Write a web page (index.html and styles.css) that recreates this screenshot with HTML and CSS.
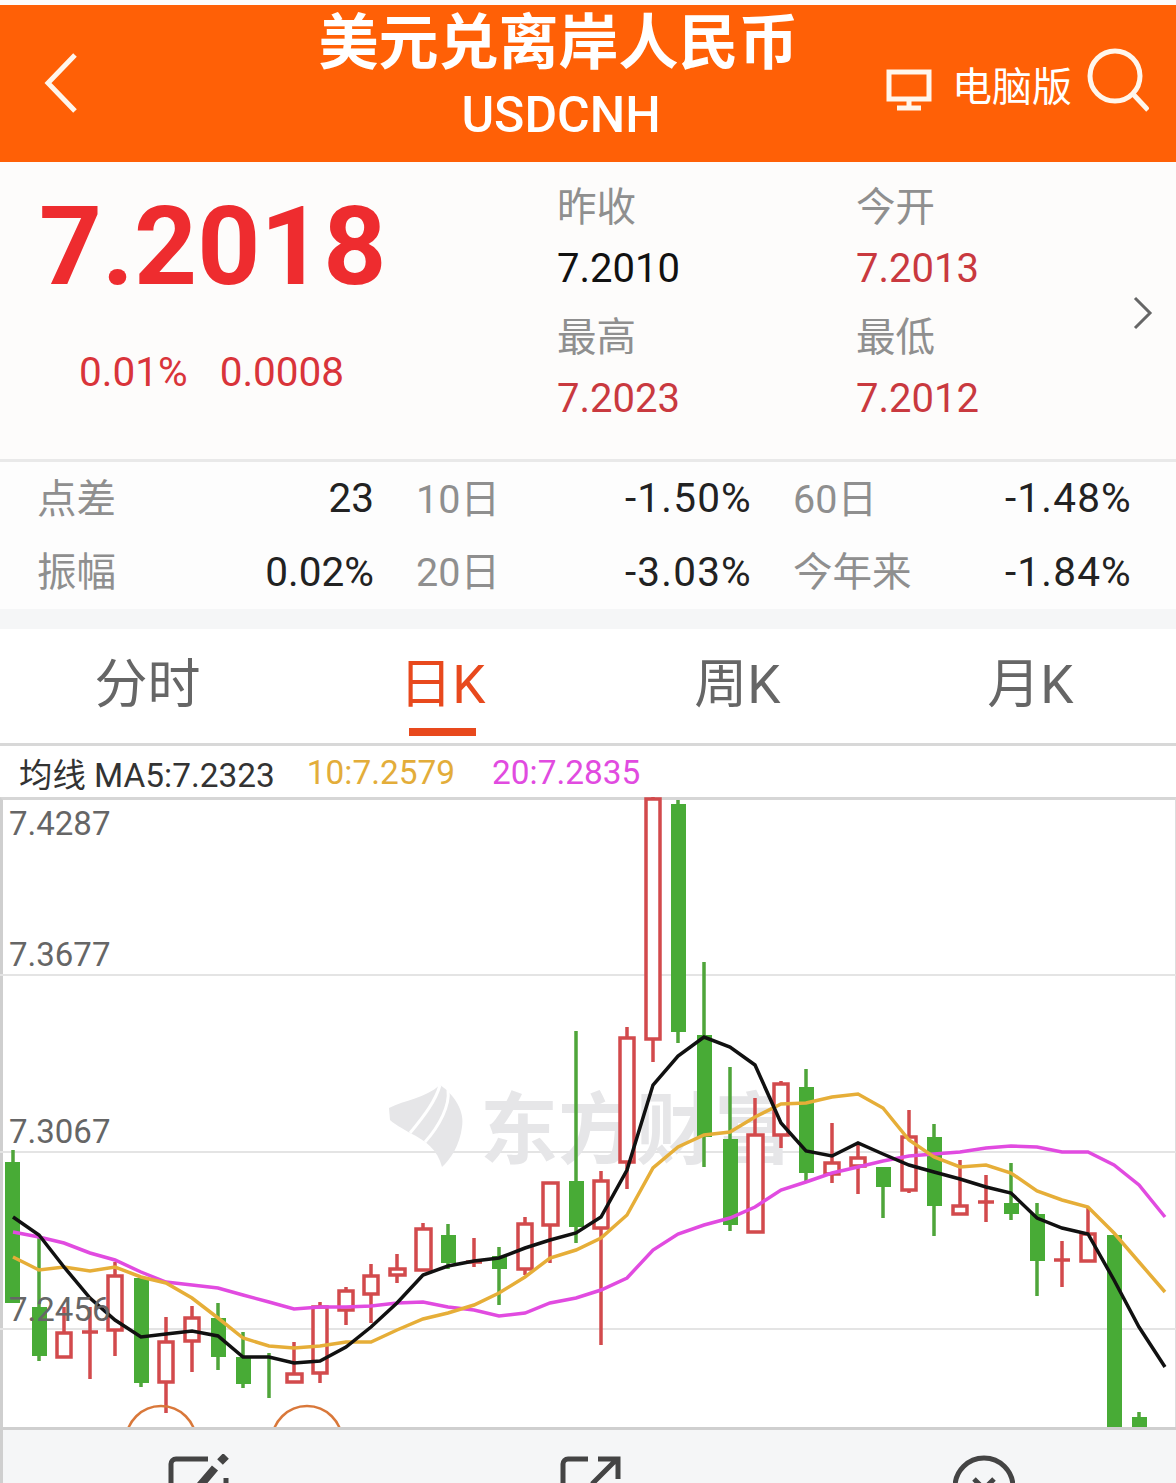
FILE: index.html
```html
<!DOCTYPE html>
<html lang="zh-CN">
<head>
  <meta charset="UTF-8" />
  <title>美元兑离岸人民币 USDCNH</title>
  <link rel="stylesheet" href="styles.css">
</head>
<body>
  <header class="topbar">
    <svg class="back" viewBox="0 0 36 62"><path d="M32 3L5 31l27 28"/></svg>
    <div class="title">
      <h1>美元兑离岸人民币</h1>
      <p>USDCNH</p>
    </div>
    <div class="tools">
      <svg class="pc" viewBox="0 0 46 42"><path d="M3 3h40v27H3zM23 30v9M11 39h24"/></svg>
      <span class="pc-label">电脑版</span>
      <svg class="search" viewBox="0 0 62 64"><circle cx="28" cy="28" r="25"/><path d="M46 46l15 16"/></svg>
    </div>
  </header>

  <section class="quote">
    <div class="price">
      <div class="last">7.2018</div>
      <div class="change"><span>0.01%</span><span>0.0008</span></div>
    </div>
    <div class="ohlc">
      <div class="cell"><label>昨收</label><b>7.2010</b></div>
      <div class="cell"><label>今开</label><b class="red">7.2013</b></div>
      <div class="cell"><label>最高</label><b class="red">7.2023</b></div>
      <div class="cell"><label>最低</label><b class="red">7.2012</b></div>
    </div>
    <svg class="more" viewBox="0 0 20 34"><path d="M2 2l15 15L2 32"/></svg>
  </section>

  <section class="stats">
    <div class="stat s1"><label>点差</label><b>23</b></div>
    <div class="stat s2"><label>10日</label><b>-1.50%</b></div>
    <div class="stat s3"><label>60日</label><b>-1.48%</b></div>
    <div class="stat s1"><label>振幅</label><b>0.02%</b></div>
    <div class="stat s2"><label>20日</label><b>-3.03%</b></div>
    <div class="stat s3"><label>今年来</label><b>-1.84%</b></div>
  </section>

  <nav class="tabs">
    <a>分时</a>
    <a class="on">日K</a>
    <a>周K</a>
    <a>月K</a>
  </nav>

  <div class="legend">
    <span>均线 MA5:7.2323</span>
    <span class="ma10">10:7.2579</span>
    <span class="ma20">20:7.2835</span>
  </div>

  <div class="chart">
    <span class="axis a1">7.4287</span>
    <span class="axis a2">7.3677</span>
    <span class="axis a3">7.3067</span>
    <span class="axis a4">7.2456</span>
    <!-- viewBox keeps page coordinates so the candles read like the screenshot -->
    <svg class="plot" viewBox="0 797 1176 630">
      <path class="grid" d="M0 975H1176M0 1152H1176M0 1329H1176"/>

      <!-- watermark -->
      <g class="mark">
        <path d="M389 1108C405 1100 425 1098 440 1085C455 1095 465 1112 462 1127C460 1145 450 1160 442 1167C438 1150 425 1140 410 1133C402 1128 394 1124 390 1120z"/>
        <path class="mark-cut" d="M440 1085C436 1100 425 1115 410 1133M448 1090C450 1105 440 1125 425 1142"/>
        <text x="480" y="1158">东方财富</text>
      </g>

      <g class="candles">
        <path class="dn" d="M13 1150V1162M39 1237V1361M141 1383V1387M218 1303V1370M243 1332V1388M269 1353V1398M448 1224V1269M499 1247V1305M576 1031V1243M678 800V1043M704 962V1167M730 1067V1231M806 1069V1182M883 1187V1218M934 1124V1236M1011 1163V1220M1037 1203V1296M1139 1412V1417"/>
        <path class="dn-body" d="M5 1162h15v141H5zM32 1307h15v49H32zM134 1278h15v105h-15zM211 1318h15v39h-15zM236 1357h15v27h-15zM441 1235h15v28h-15zM492 1256h15v13h-15zM569 1181h15v46h-15zM671 804h15v228h-15zM697 1035h15v102h-15zM723 1139h15v86h-15zM799 1087h15v86h-15zM876 1167h15v20h-15zM927 1137h15v69h-15zM1004 1203h15v11h-15zM1030 1214h15v47h-15zM1107 1235h15v192h-15zM1132 1417h15v10h-15z"/>
        <path class="up" d="M64 1307V1333M90 1307V1379M82 1332H98M115 1262V1276M115 1330V1356M166 1317V1342M166 1382V1413M192 1306V1318M192 1341V1372M294 1342V1374M320 1302V1307M320 1373V1383M346 1287V1291M346 1310V1325M371 1264V1276M371 1294V1323M397 1254V1269M397 1275V1283M423 1223V1229M474 1238V1267M466 1262H482M525 1217V1224M525 1269V1275M550 1225V1263M601 1171V1181M601 1228V1345M627 1027V1038M627 1162V1189M653 797V799M653 1039V1062M755 1098V1135M781 1081V1084M781 1135V1148M832 1123V1163M832 1174V1183M858 1143V1158M858 1166V1194M909 1110V1137M909 1190V1193M960 1160V1206M986 1175V1222M978 1202H994M1062 1241V1287M1054 1260H1070M1088 1208V1234"/>
        <path class="up-body" d="M57 1333h14v24H57zM108 1276h14v54h-14zM159 1342h14v40h-14zM185 1318h14v23h-14zM287 1374h15v8h-15zM313 1307h14v66h-14zM339 1291h14v19h-14zM364 1276h14v18h-14zM390 1269h15v6h-15zM416 1229h15v41h-15zM518 1224h14v45h-14zM543 1183h15v42h-15zM594 1181h14v47h-14zM620 1038h14v124h-14zM646 799h14v240h-14zM748 1135h15v97h-15zM774 1084h14v51h-14zM825 1163h14v11h-14zM851 1158h14v8h-14zM902 1137h14v53h-14zM953 1206h14v8h-14zM1081 1234h14v27h-14z"/>
      </g>

      <polyline class="line l20" points="13,1232 39,1237 64,1243 90,1253 115,1260 141,1272 166,1282 192,1285 218,1288 243,1295 269,1302 294,1309 320,1307 346,1307 371,1306 397,1303 423,1302 448,1307 474,1310 499,1316 525,1313 550,1303 576,1298 601,1290 627,1278 653,1250 678,1234 704,1225 730,1218 755,1207 781,1190 806,1182 832,1173 858,1167 883,1161 909,1156 934,1154 960,1152 986,1148 1011,1146 1037,1147 1062,1152 1088,1152 1114,1165 1139,1185 1165,1217"/>
      <polyline class="line l10" points="13,1257 39,1270 64,1267 90,1271 115,1267 141,1277 166,1283 192,1298 218,1318 243,1338 269,1346 294,1348 320,1346 346,1342 371,1342 397,1330 423,1319 448,1313 474,1305 499,1293 525,1277 550,1258 576,1250 601,1238 627,1215 653,1168 678,1147 704,1135 730,1132 755,1117 781,1104 806,1103 832,1097 858,1094 883,1108 909,1140 934,1157 960,1167 986,1165 1011,1173 1037,1191 1062,1200 1088,1207 1114,1233 1139,1262 1165,1292"/>
      <polyline class="line l5" points="13,1217 39,1235 64,1267 90,1298 115,1320 141,1337 166,1334 192,1331 218,1336 243,1357 269,1357 294,1363 320,1361 346,1347 371,1327 397,1303 423,1275 448,1266 474,1261 499,1258 525,1248 550,1240 576,1233 601,1217 627,1170 653,1085 678,1056 704,1037 730,1047 755,1065 781,1123 806,1151 832,1156 858,1143 883,1154 909,1165 934,1172 960,1179 986,1187 1011,1193 1037,1218 1062,1228 1088,1234 1114,1280 1139,1327 1165,1367"/>

      <!-- the two event markers, cut off by the bottom edge -->
      <circle class="event" cx="161" cy="1441" r="35"/>
      <circle class="event" cx="307" cy="1441" r="35"/>
    </svg>
  </div>

  <footer class="actions">
    <svg viewBox="0 0 62 54"><path d="M40 5H8a5 5 0 0 0-5 5v44M58 24v30"/><path class="thick" d="M30 34L47 14M52 8l6-6"/></svg>
    <svg viewBox="0 0 62 54"><path d="M28 5H8a5 5 0 0 0-5 5v44M32 30L56 6M38 5h20v20"/></svg>
    <svg viewBox="0 0 62 54"><circle cx="31" cy="33" r="29"/><path d="M21 25l20 20M41 25L21 45"/></svg>
  </footer>
</body>
</html>
```

FILE: styles.css
```css
* {
  box-sizing: border-box;
}
html, body {
  height: 100%;
}
body {
  margin: 0;
  height: 1483px;
  overflow: hidden;
  background-color: #fdfcfb;
  color: #111;
  font-family: "Roboto", "Noto Sans CJK SC", sans-serif;
  display: flex;
  flex-direction: column;
}
label, b {
  display: block;
  font-weight: 400;
}

/* top bar */
.topbar {
  flex: none;
  height: 157px;
  margin-top: 5px;
  background-color: #ff6006;
  color: #fff;
  position: relative;
  display: flex;
  justify-content: center;
}
.back {
  position: absolute;
  left: 43px;
  top: 47px;
  width: 36px;
  height: 62px;
}
.back path, .pc path, .search circle, .search path, .more path {
  fill: none;
  stroke: #fff6ec;
  stroke-width: 5;
}
.title {
  text-align: center;
  margin-left: -59px;
}
.title h1 {
  margin: 5px 0 0;
  font-size: 60px;
  line-height: 68px;
  font-weight: 700;
}
.title p {
  margin: 9px 0 0;
  font-size: 50px;
  line-height: 56px;
  font-weight: 500;
  padding-left: 5px;
}
.tools {
  position: absolute;
  left: 886px;
  top: 43px;
  display: flex;
  align-items: flex-start;
}
.pc {
  width: 46px;
  height: 42px;
  margin-top: 21px;
}
.pc-label {
  margin: 15px 0 0 20px;
  font-size: 40px;
  line-height: 50px;
}
.search {
  width: 62px;
  height: 64px;
  margin-left: 15px;
}

/* quote block */
.quote {
  flex: none;
  height: 300px;
  position: relative;
  display: flex;
  border-bottom: 3px solid #e9e9e9;
}
.price {
  width: 557px;
  padding-left: 39px;
}
.last {
  margin-top: 27px;
  font-size: 110px;
  line-height: 116px;
  font-weight: 700;
  color: #ee2c2f;
}
.change {
  margin-top: 42px;
  padding-left: 40px;
  font-size: 40.5px;
  line-height: 50px;
  color: #d9343a;
  display: flex;
  gap: 32px;
}
.ohlc {
  display: grid;
  grid-template-columns: 299px 200px;
  grid-template-rows: repeat(2, 130px);
  padding-top: 21px;
}
.cell label {
  font-size: 39.5px;
  line-height: 50px;
  color: #8f8f8f;
}
.cell b {
  margin-top: 11px;
  font-size: 40px;
  line-height: 50px;
}
.red {
  color: #c9393f;
}
.more {
  position: absolute;
  left: 1133px;
  top: 134px;
  width: 20px;
  height: 34px;
}
.more path {
  stroke: #666;
  stroke-width: 3;
}

/* stats */
.stats {
  flex: none;
  height: 147px;
  padding: 0 44px 0 38px;
  display: grid;
  grid-template-columns: 336px 378px 1fr;
  grid-template-rows: 72px 75px;
  background-color: #fdfdfd;
}
.stat {
  display: flex;
  justify-content: space-between;
  align-items: center;
  font-size: 40.5px;
}
.stat label {
  font-size: 39.5px;
  margin-bottom: 6px;
  color: #8f8f8f;
}
.stat b {
  color: #222;
}
.s1 label {
  margin-left: -1px;
}
.s2 b, .s3 b {
  letter-spacing: 1.2px;
}
.s2 {
  padding-left: 42px;
}
.s3 {
  padding-left: 41px;
}

/* tabs */
.tabs {
  flex: none;
  height: 137px;
  border-top: 20px solid #f5f6f7;
  border-bottom: 3px solid #d8d8d8;
  background-color: #fff;
  display: grid;
  grid-template-columns: 295px 295px 295px 291px;
  font-size: 53px;
  color: #666;
  text-align: center;
}
.tabs a {
  line-height: 112px;
  height: 114px;
  position: relative;
}
.tabs .on {
  color: #e8491d;
}
.tabs .on::after {
  content: "";
  position: absolute;
  left: 114px;
  width: 67px;
  bottom: 7px;
  height: 8px;
  background-color: #e8491d;
}

/* legend */
.legend {
  flex: none;
  height: 51px;
  padding: 2px 0 0 19px;
  display: flex;
  align-items: center;
  gap: 32px;
  font-size: 33.4px;
  color: #333;
  background-color: #fff;
}
.ma10 {
  color: #e3ad3a;
}
.ma20 {
  margin-left: 5px;
  color: #e14be0;
}

/* chart */
.chart {
  flex: none;
  height: 630px;
  position: relative;
  background-color: #fff;
  border-top: 3px solid #d6d6d6;
  border-left: 3px solid #cfcfcf;
  border-right: 1px solid #ddd;
}
.plot {
  position: absolute;
  left: -3px;
  top: -3px;
  width: 1176px;
  height: 630px;
  display: block;
}
.axis {
  position: absolute;
  left: 6px;
  font-size: 33px;
  line-height: 40px;
  color: #666;
  z-index: 1;
}
.a1 { top: 4px; }
.a2 { top: 135px; }
.a3 { top: 312px; }
.a4 { top: 490px; }
.grid {
  fill: none;
  stroke: #e4e4e4;
  stroke-width: 2;
}
.mark {
  fill: #e6e6e8;
}
.mark-cut {
  fill: none;
  stroke: #fff;
  stroke-width: 3;
}
.mark text {
  font-family: "Noto Sans CJK SC", sans-serif;
  font-size: 78px;
  font-weight: 700;
}
.dn {
  fill: none;
  stroke: #4fa53a;
  stroke-width: 3.5;
}
.dn-body {
  fill: #48ab36;
}
.up {
  fill: none;
  stroke: #d24a4c;
  stroke-width: 3.5;
}
.up-body {
  fill: #fff;
  stroke: #d24a4c;
  stroke-width: 3.5;
}
.line {
  fill: none;
  stroke-width: 3.5;
}
.l5 { stroke: #111; }
.l10 { stroke: #e6ae38; }
.l20 { stroke: #e14be0; }
.event {
  fill: none;
  stroke: #d9783a;
  stroke-width: 2.5;
}

/* bottom actions */
.actions {
  flex: 1;
  background-color: #f5f6f7;
  border-top: 3px solid #cfcfcf;
  border-left: 3px solid #cfcfcf;
  display: flex;
  overflow: hidden;
}
.actions svg {
  flex: none;
  width: 62px;
  height: 54px;
  margin-top: 24px;
  fill: none;
  stroke: #444;
  stroke-width: 5;
}
.actions svg:nth-child(1) { margin-left: 165px; }
.actions svg:nth-child(2) { margin-left: 330px; }
.actions svg:nth-child(3) { margin-left: 331px; }
.actions .thick {
  stroke-width: 8;
}
```
